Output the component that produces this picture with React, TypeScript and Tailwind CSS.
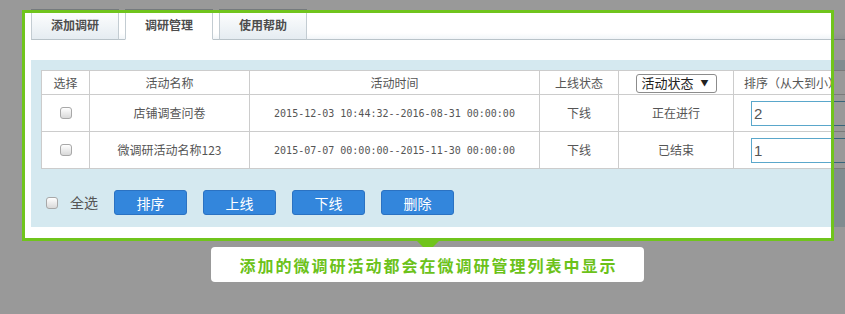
const Box = () => (
  <span className="inline-block w-[12px] h-[12px] rounded-[3px] border border-[#a8a8a8] bg-gradient-to-b from-white to-[#d9d9d9]" />
);

const rows = [
  { name: '店铺调查问卷', time: '2015-12-03 10:44:32--2016-08-31 00:00:00', online: '下线', state: '正在进行', sort: '2' },
  { name: '微调研活动名称123', time: '2015-07-07 00:00:00--2015-11-30 00:00:00', online: '下线', state: '已结束', sort: '1' },
];

export default function App() {
  const tab = 'w-[88px] h-[31px] -mb-px border border-[#c3ccd2] flex items-center justify-center text-[12px] font-bold text-[#4d4d4d]';
  const th = 'border border-[#cccccc] h-[24px] font-normal text-[12px] text-[#555]';
  const cell = 'border border-[#cccccc] h-[37px] text-[#555] text-center';
  const td = `${cell} text-[12px]`;

  return (
    <div className="relative w-[845px] h-[314px] overflow-hidden bg-white font-['Noto_Sans_CJK_SC','Liberation_Sans',sans-serif]">
      <div className="pt-[9px] pl-[31px]">
        {/* tabs */}
        <div className="flex items-end gap-[6px] h-[31px] border-b border-[#b9c3c9] bg-gradient-to-b from-white from-80% to-[#f1f5f8]">
          <div className={`${tab} border-b-[#b9c3c9] bg-gradient-to-b from-white to-[#e5ecf1]`}>添加调研</div>
          <div className={`${tab} bg-white border-b-white`}>调研管理</div>
          <div className={`${tab} border-b-[#b9c3c9] bg-gradient-to-b from-white to-[#e5ecf1]`}>使用帮助</div>
        </div>

        {/* list panel */}
        <div className="mt-[20px] w-[900px] bg-[#d5e9f0] pt-[10px] pl-[10px] pb-[12px]">
          <table className="table-fixed border-collapse bg-white w-[822px]">
            <colgroup>
              <col className="w-[48px]" />
              <col className="w-[160px]" />
              <col className="w-[290px]" />
              <col className="w-[79px]" />
              <col className="w-[115px]" />
              <col className="w-[130px]" />
            </colgroup>
            <thead>
              <tr>
                <th className={th}>选择</th>
                <th className={th}>活动名称</th>
                <th className={th}>活动时间</th>
                <th className={th}>上线状态</th>
                <th className={th}>
                  <span className="inline-flex items-center w-[81px] h-[19px] align-middle border border-[#8c8c8c] rounded-[3px] bg-white pl-[5px] text-[13px] text-[#222]">
                    活动状态
                    <span className="ml-auto mr-[7px] text-[8px] text-[#222]">▼</span>
                  </span>
                </th>
                <th className={`${th} text-left pl-[10px] whitespace-nowrap`}>排序（从大到小）</th>
              </tr>
            </thead>
            <tbody>
              {rows.map((r) => (
                <tr key={r.name}>
                  <td className={td}>
                    <span className="flex justify-center"><Box /></span>
                  </td>
                  <td className={td}>{r.name}</td>
                  <td className={`${cell} font-['DejaVu_Sans_Mono',monospace] text-[10px]`}>{r.time}</td>
                  <td className={td}>{r.online}</td>
                  <td className={td}>{r.state}</td>
                  <td className={`${td} text-left`}>
                    <input
                      readOnly
                      defaultValue={r.sort}
                      className="ml-[17px] w-[100px] h-[25px] border border-[#5aa7cb] bg-white px-[2px] text-[15px] text-[#555] font-['Liberation_Sans',sans-serif] outline-none"
                    />
                  </td>
                </tr>
              ))}
            </tbody>
          </table>

          <div className="flex items-center h-[25px] mt-[21px] pl-[5px]">
            <Box />
            <span className="ml-[12px] text-[14px] text-[#555]">全选</span>
            <div className="flex gap-[16px] ml-[16px]">
              {['排序', '上线', '下线', '删除'].map((b) => (
                <button
                  key={b}
                  className="w-[73px] h-[25px] rounded-[3px] border border-[#2b72c2] bg-[#3386dc] text-white text-[14px] leading-none"
                >
                  {b}
                </button>
              ))}
            </div>
          </div>
        </div>
      </div>

      {/* highlight mask */}
      <div className="absolute left-[22px] top-[10px] w-[812px] h-[231px] border-[3px] border-[#70c41c] shadow-[0_0_0_2000px_rgba(0,0,0,0.4)]" />

      {/* callout */}
      <div className="absolute left-[417px] top-[241px] w-0 h-0 border-x-[11px] border-x-transparent border-t-[11px] border-t-[#70c41c]" />
      <div className="absolute left-[211px] top-[247px] w-[433px] h-[35px] rounded-[4px] bg-white flex items-center justify-center pl-[2px] text-[16px] font-bold tracking-[2px] text-[#6cc21a]">
        添加的微调研活动都会在微调研管理列表中显示
      </div>
    </div>
  );
}
